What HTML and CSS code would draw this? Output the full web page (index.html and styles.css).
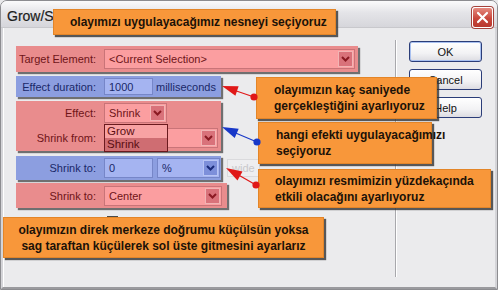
FILE: index.html
```html
<!DOCTYPE html>
<html>
<head>
<meta charset="utf-8">
<link rel="stylesheet" href="styles.css">
</head>
<body>
<div class="window">
  <div class="titlebar">
    <span class="title">Grow/Shrink</span>
    <div class="close">
      <svg width="13" height="13" viewBox="0 0 13 13"><path d="M2 2 L11 11 M11 2 L2 11" stroke="#fff" stroke-width="2.2" stroke-linecap="round"/></svg>
    </div>
  </div>
  <div class="body">
    <div class="form">
      <div class="row pink target">
        <span class="lbl">Target Element:</span>
        <div class="ctl sel sel-target"><span class="val">&lt;Current Selection&gt;</span><span class="drop"><svg width="9" height="6" viewBox="0 0 9 6"><path d="M1 1 L4.5 4.5 L8 1" fill="none" stroke-width="2"/></svg></span></div>
      </div>
      <div class="row blue duration">
        <span class="lbl">Effect duration:</span>
        <div class="ctl inp inp-dur"><span class="val">1000</span></div>
        <span class="unit">milliseconds</span>
      </div>
      <div class="row pink group">
        <div class="sub">
          <span class="lbl">Effect:</span>
          <div class="ctl sel sel-effect"><span class="val">Shrink</span><span class="drop"><svg width="9" height="6" viewBox="0 0 9 6"><path d="M1 1 L4.5 4.5 L8 1" fill="none" stroke-width="2"/></svg></span></div>
        </div>
        <div class="sub">
          <span class="lbl">Shrink from:</span>
          <div class="ctl sel sel-from"><span class="val"></span><span class="drop"><svg width="9" height="6" viewBox="0 0 9 6"><path d="M1 1 L4.5 4.5 L8 1" fill="none" stroke-width="2"/></svg></span></div>
        </div>
        <div class="list">
          <div class="item">Grow</div>
          <div class="item on">Shrink</div>
        </div>
      </div>
      <div class="row blue shrinkto">
        <span class="lbl">Shrink to:</span>
        <div class="ctl inp inp-pct"><span class="val">0</span></div>
        <div class="ctl sel sel-pct"><span class="val">%</span><span class="drop"><svg width="9" height="6" viewBox="0 0 9 6"><path d="M1 1 L4.5 4.5 L8 1" fill="none" stroke-width="2"/></svg></span></div>
        <span class="ghost">wide</span>
      </div>
      <div class="row pink shrinkpos">
        <span class="lbl">Shrink to:</span>
        <div class="ctl sel sel-pos"><span class="val">Center</span><span class="drop"><svg width="9" height="6" viewBox="0 0 9 6"><path d="M1 1 L4.5 4.5 L8 1" fill="none" stroke-width="2"/></svg></span></div>
      </div>
      <div class="check"></div>
    </div>
    <div class="sep"></div>
    <div class="buttons">
      <div class="btn default">OK</div>
      <div class="btn">Cancel</div>
      <div class="btn">Help</div>
    </div>
  </div>

  <div class="callout c1">olayımızı uygulayacağımız nesneyi seçiyoruz</div>
  <div class="callout c2">olayımızın kaç saniyede<br>gerçekleştiğini ayarlıyoruz</div>
  <div class="callout c3">hangi efekti uygulayacağımızı<br>seçiyoruz</div>
  <div class="callout c4">olayımızı resmimizin yüzdekaçında<br>etkili olacağını ayarlıyoruz</div>
  <div class="callout c5">olayımızın direk merkeze doğrumu küçülsün yoksa<br>sag taraftan küçülerek sol üste gitmesini ayarlarız</div>

  <svg class="arrows" width="498" height="290" viewBox="0 0 498 290">
    <g stroke="#e01818" fill="#e01818">
      <line x1="254" y1="97" x2="232" y2="89.5" stroke-width="1.2"/>
      <polygon points="222,86 235.4,95.7 238.6,86.3" stroke="none"/>
      <circle cx="254" cy="97" r="3.6" stroke="none"/>
    </g>
    <g stroke="#1838c8" fill="#1838c8">
      <line x1="257" y1="142" x2="232" y2="131.5" stroke-width="1.2"/>
      <polygon points="222,127 234.7,137.9 238.7,128.7" stroke="none"/>
      <circle cx="257" cy="142" r="3.6" stroke="none"/>
    </g>
    <g stroke="#e01818" fill="#e01818">
      <line x1="256" y1="185" x2="235" y2="173" stroke-width="1.2"/>
      <polygon points="226,168 237.5,180.4 242.5,171.6" stroke="none"/>
      <circle cx="256" cy="185" r="3.6" stroke="none"/>
    </g>
  </svg>
</div>
</body>
</html>
```

FILE: styles.css
```css
* { box-sizing: border-box; }
html, body { margin: 0; padding: 0; }
body {
  width: 498px;
  height: 290px;
  overflow: hidden;
  font-family: "Liberation Sans", Arial, sans-serif;
  font-size: 11px;
  background: #e9e9eb;
}
.window {
  position: relative;
  width: 498px;
  height: 290px;
  background: #ebebed;
  border: 1px solid #8c8c90;
  border-radius: 7px 7px 0 0;
  overflow: hidden;
}
.titlebar {
  height: 27px;
  display: flex;
  align-items: center;
  justify-content: space-between;
  padding: 0 4px 0 6px;
  background: linear-gradient(#fbfbfc 0%, #e4e4e8 45%, #d6d6db 100%);
  border-bottom: 1px solid #c8c8cc;
}
.title {
  font-size: 14px;
  color: #1c1c1c;
  padding-top: 3px;
  -webkit-text-stroke: 0.2px #1c1c1c;
}
.close {
  width: 21px;
  height: 21px;
  margin-top: 6px;
  border-radius: 3px;
  border: 1px solid #fff;
  background: linear-gradient(#e58a7f, #c9473c 55%, #b8382e);
  display: flex;
  align-items: center;
  justify-content: center;
  box-shadow: 0 0 0 1px #a6413a;
}
.body {
  display: flex;
  height: 261px;
  border-left: 2px solid #d4d4d8;
  border-right: 2px solid #d4d4d8;
  border-bottom: 2px solid #9a9a9e;
  box-shadow: inset 1px 0 0 #fff;
}
.form {
  width: 392px;
  padding: 18px 0 0 13px;
  display: flex;
  flex-direction: column;
  align-items: flex-start;
}
.row {
  display: flex;
  align-items: center;
  box-shadow: 2px 2px 1px rgba(70,70,70,0.75);
}
.pink { background: #e98c8d; color: #6e1418; }
.blue { background: #8c9ee0; color: #1a2868; }
.lbl {
  width: 80px;
  text-align: right;
  margin-right: 8px;
  flex: none;
}
.ctl {
  height: 20px;
  display: flex;
  align-items: center;
  flex: none;
}
.pink .ctl { background: #fb9ea0; border: 1px solid #c97478; }
.blue .ctl { background: #a5b4f1; border: 1px solid #7686c8; }
.val { padding-left: 4px; flex: 1; white-space: nowrap; overflow: hidden; }
.drop {
  width: 15px;
  height: 16px;
  margin-right: 1px;
  display: flex;
  align-items: center;
  justify-content: center;
  flex: none;
}
.pink .drop { background: #d9727a; border: 1px solid #f1b4b4; stroke: #8a1a22; }
.blue .drop { background: #7d8fda; border: 1px solid #b8c4f4; stroke: #1a2a78; }

.target { width: 342px; height: 26px; }
.sel-target { width: 251px; }
.duration { width: 205px; height: 21px; margin-top: 4px; }
.inp-dur { width: 49px; height: 17px; }
.unit { margin-left: 3px; }
.group {
  position: relative;
  width: 205px;
  height: 50px;
  margin-top: 4px;
  flex-direction: column;
  align-items: flex-start;
  padding-top: 2px;
  gap: 5px;
}
.sub { display: flex; align-items: center; }
.sel-effect { width: 63px; }
.sel-from { width: 114px; }
.list {
  position: absolute;
  left: 88px;
  top: 23px;
  width: 64px;
  border: 1px solid #6a1a1e;
  background: #f8a2a3;
  color: #5a0e12;
  font-size: 11.5px;
}
.item { height: 13px; line-height: 13px; padding-left: 2px; }
.item.on { background: #cf6d72; }
.shrinkto { width: 205px; height: 24px; margin-top: 5px; position: relative; }
.inp-pct { width: 49px; }
.sel-pct { width: 63px; margin-left: 4px; }
.ghost {
  position: absolute;
  left: 211px;
  top: 3px;
  height: 18px;
  padding: 2px 4px;
  color: #c9c9cc;
  border: 1px solid #dadadd;
  background: #eeeef0;
}
.shrinkpos { width: 211px; height: 25px; margin-top: 3px; }
.sel-pos { width: 118px; }
.check {
  width: 11px;
  height: 11px;
  margin: 8px 0 0 91px;
  border: 1px solid #4a4a4a;
  background: #fff;
}
.sep {
  width: 2px;
  height: 237px;
  margin-top: 12px;
  border-left: 1px solid #a8a8ac;
  border-right: 1px solid #fff;
  flex: none;
}
.buttons {
  margin-left: 12px;
  padding-top: 13px;
  display: flex;
  flex-direction: column;
  gap: 7px;
}
.btn {
  width: 73px;
  height: 21px;
  border: 1px solid #2b3d78;
  border-radius: 3px;
  background: linear-gradient(#ffffff, #f2f2f4 60%, #dcdce2);
  display: flex;
  align-items: center;
  justify-content: center;
  color: #111;
  font-size: 11px;
}
.btn.default { box-shadow: inset 0 0 0 1px #a8c0f0; }

.callout {
  position: absolute;
  background: #f8973a;
  color: #1c1208;
  font-weight: bold;
  font-size: 12px;
  line-height: 16px;
  box-shadow: 2px 2px 1px rgba(50,50,50,0.8);
  border: 1px solid #e38528;
  white-space: nowrap;
}
.c1 { left: 52px; top: 8px; width: 283px; height: 26px; padding: 4px 0 0 16px; }
.c2 { left: 255px; top: 76px; width: 181px; height: 42px; padding: 4px 0 0 17px; }
.c3 { left: 257px; top: 121px; width: 174px; height: 42px; padding: 4px 0 0 17px; }
.c4 { left: 257px; top: 168px; width: 233px; height: 39px; padding: 3px 0 0 16px; }
.c5 { left: 2px; top: 216px; width: 321px; height: 41px; padding: 4px 0 0 0; text-align: center; }
.arrows { position: absolute; left: -1px; top: -1px; }
```
